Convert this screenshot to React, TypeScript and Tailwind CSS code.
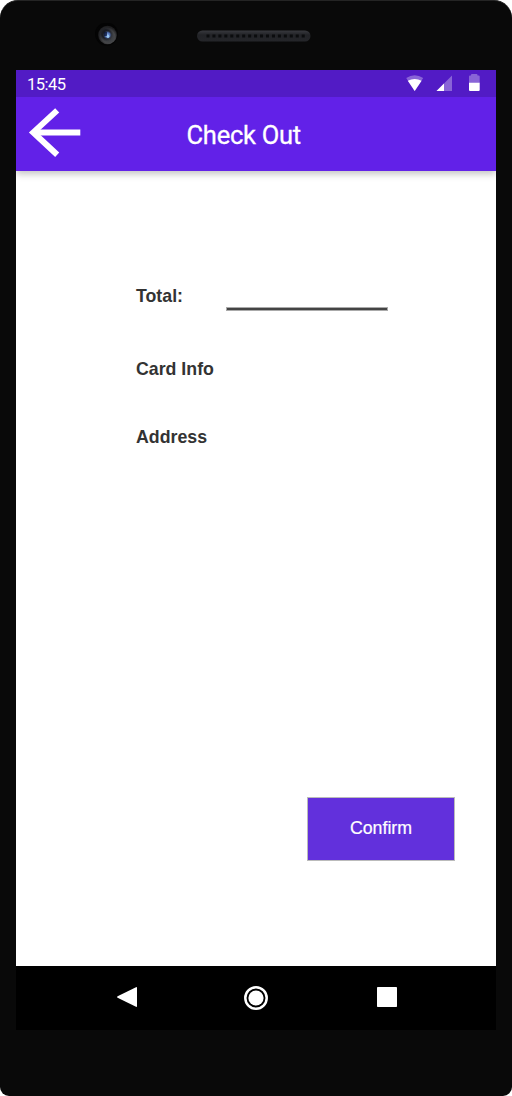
function Camera() {
  return (
    <svg className="h-6 w-6" viewBox="0 0 24 24" aria-hidden="true">
      <defs>
        <radialGradient id="ring" cx="0.55" cy="0.6">
          <stop offset="0" stopColor="#30343c" />
          <stop offset="0.7" stopColor="#454648" />
          <stop offset="1" stopColor="#1f1f21" />
        </radialGradient>
        <radialGradient id="lens">
          <stop offset="0" stopColor="#8fb6f4" />
          <stop offset="0.55" stopColor="#4a69aa" />
          <stop offset="1" stopColor="#30353f" stopOpacity="0" />
        </radialGradient>
        <radialGradient id="core">
          <stop offset="0" stopColor="#101319" />
          <stop offset="0.6" stopColor="#1c1e24" />
          <stop offset="1" stopColor="#303238" stopOpacity="0" />
        </radialGradient>
      </defs>
      <circle cx="11.5" cy="11" r="11.5" fill="#040404" />
      <circle cx="12.5" cy="12" r="9.3" fill="url(#ring)" />
      <circle cx="11" cy="11" r="7.5" fill="url(#core)" />
      <circle cx="12.5" cy="12" r="4.6" fill="url(#lens)" />
      <path d="M9 9h3v4H9z" fill="#0b1433" opacity=".75" />
      <circle cx="13" cy="13.5" r="1.4" fill="#9ccaf0" />
    </svg>
  );
}

function Speaker() {
  return (
    <svg className="h-3 w-[114px]" viewBox="0 0 114 12" aria-hidden="true">
      <defs>
        <linearGradient id="speaker" x1="0" x2="0" y1="0" y2="1">
          <stop offset="0" stopColor="#38393e" />
          <stop offset="0.4" stopColor="#222327" />
          <stop offset="1" stopColor="#25262a" />
        </linearGradient>
      </defs>
      <rect x="0" y="0.5" width="113.5" height="11" rx="5.5" fill="url(#speaker)" />
      <path d="M9.5 6H108" stroke="#0b0c0e" strokeWidth="3" strokeDasharray="3 2.95" />
    </svg>
  );
}

function StatusIcons() {
  return (
    <svg className="h-[27px] w-[80px]" viewBox="400 70 80 27" fill="#fff" aria-hidden="true">
      <path d="M406.2 78Q414.7 72.3 423.2 78L414.7 91Z" opacity=".32" />
      <path d="M407.8 80.8Q414.7 77.2 421.6 80.8L414.7 91Z" />
      <path d="M436.5 91 452 75.5V91Z" opacity=".32" />
      <path d="M436.5 91 444 83.5V91Z" />
      <path d="M469 83V76.5Q469 75.5 470 75.5H471V75Q471 74 472 74H476.5Q477.5 74 477.5 75V75.5H478.7Q479.7 75.5 479.7 76.5V83Z" opacity=".32" />
      <path d="M469 82.7H479.7V90Q479.7 91 478.7 91H470Q469 91 469 90Z" />
    </svg>
  );
}

export default function App() {
  return (
    <div className="h-[1096px] w-[512px] bg-white">
      <div className="flex h-full flex-col rounded-t-[18px] rounded-b-[9px] border-t border-[#242424] bg-[#090909] px-4 font-['Roboto',sans-serif]">
        <div className="flex h-[69px] shrink-0 items-start pt-[22px]">
          <div className="ml-[79px]"><Camera /></div>
          <div className="ml-[77.5px] mt-[7px]"><Speaker /></div>
        </div>
        <main className="flex h-[960px] shrink-0 flex-col bg-white">
          <div className="flex h-[27px] shrink-0 items-center justify-between bg-[#521bc5] pr-4 pl-[11px] text-white">
            <span className="pt-[2px] text-[16.5px] leading-[24px] tracking-[-0.5px]">15:45</span>
            <StatusIcons />
          </div>
          <header className="flex h-[74px] shrink-0 items-start bg-[#6221e8] text-white shadow-[0_3px_7px_rgba(0,0,0,0.24)] [clip-path:inset(0_0_-12px_0)]">
            <button aria-label="Back" className="mt-[10px] ml-3 h-[52px] w-[54px]">
              <svg viewBox="28 107 54 52" fill="none" stroke="#fff">
                <path d="M57.2 110.4 33.3 132.4 57.2 154.7" strokeWidth="6" />
                <path d="M34 132.5H80.3" strokeWidth="6" />
              </svg>
            </button>
            <h1 className="mt-[22px] ml-[104.5px] text-[25.5px] leading-8 tracking-[-0.25px] whitespace-nowrap [-webkit-text-stroke:0.3px_#fff]">Check Out</h1>
          </header>
          <section className="flex grow flex-col pt-[115px] pl-[120px] font-['Liberation_Sans',sans-serif] text-[17.75px] leading-5 font-bold text-[#333]">
            <div className="flex h-[73px] items-start">
              <span className="w-[90px]">Total:</span>
              <div className="mt-[21px] h-1 w-[162px] border border-[#aaa] bg-[#444]" />
            </div>
            <div className="h-[68px]">Card Info</div>
            <div>Address</div>
            <button className="mt-auto mr-[41px] mb-[105px] h-[64px] w-[148px] self-end border border-[#bbb] bg-[#6230dc] pb-[2px] text-[17.75px] font-normal text-white [-webkit-text-stroke:0.2px_#fff]">Confirm</button>
          </section>
          <nav className="h-16 shrink-0 bg-black">
            <svg className="h-16 w-[480px]" viewBox="16 966 480 64" fill="#fff" aria-label="Navigation">
              <path d="M117.6 996.3 136 987.2Q137 986.8 137 988V1006Q137 1007.2 136 1006.8L117.6 997.8Q116.3 997 117.6 996.3Z" />
              <circle cx="256" cy="998" r="7.6" />
              <circle cx="256" cy="998" r="10.7" fill="none" stroke="#fff" strokeWidth="2.5" />
              <rect x="377" y="987" width="20" height="20" rx="0.7" />
            </svg>
          </nav>
        </main>
      </div>
    </div>
  );
}
